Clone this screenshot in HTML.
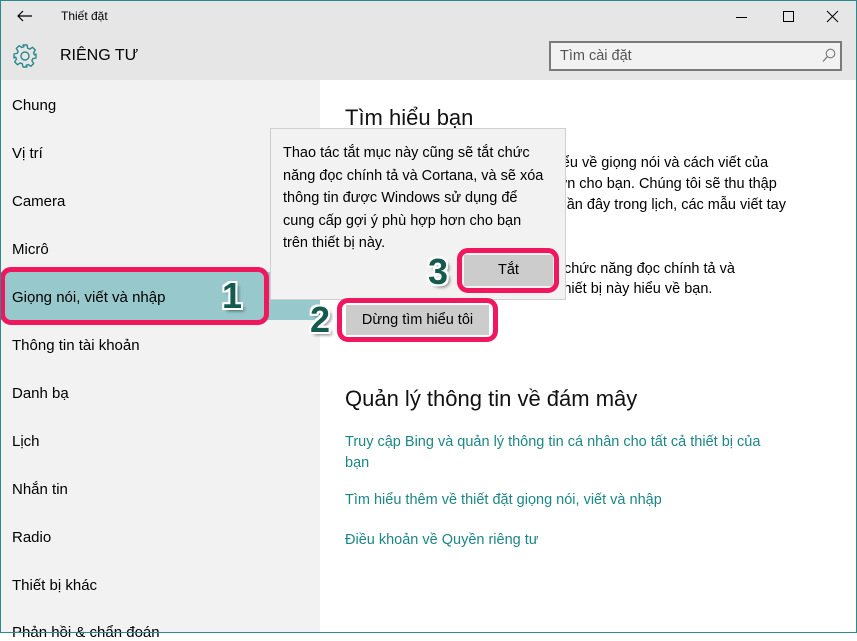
<!DOCTYPE html>
<html><head><meta charset="utf-8"><style>
*{margin:0;padding:0;box-sizing:border-box}
body{width:857px;height:633px;overflow:hidden;position:relative;background:#fff;font-family:"Liberation Sans","DejaVu Sans",sans-serif;color:#000}
.a{position:absolute;white-space:nowrap}
.frame{position:absolute;left:0;top:0;width:857px;height:633px;border:1px solid #2b8a8e;pointer-events:none;z-index:50}
.top{position:absolute;left:0;top:0;width:857px;height:80px;background:#e6e6e6}
.side{position:absolute;left:0;top:80px;width:320px;height:553px;background:#f2f2f2}
.item{position:absolute;left:12px;font-size:15px;color:#000}
.p{font-size:14.5px;color:#000}
.link{font-size:14.5px;color:#1c8686}
.pink{position:absolute;border:5px solid #f0175e;border-radius:11px}
.num{position:absolute;font-size:36px;font-weight:900;color:#155a4e;font-family:"Liberation Sans",sans-serif;
text-shadow:2px 0 0 #fff,-2px 0 0 #fff,0 2px 0 #fff,0 -2px 0 #fff,2px 2px 0 #fff,-2px -2px 0 #fff,2px -2px 0 #fff,-2px 2px 0 #fff,3px 3px 3px rgba(0,0,0,.5)}
.btn{position:absolute;background:#cccccc;font-size:14.5px;text-align:center}
</style></head><body>
<div class="top"></div>
<svg class="a" style="left:16px;top:9px" width="18" height="14" viewBox="0 0 18 14"><path d="M16 7H2M7 2L2 7l5 5" fill="none" stroke="#000" stroke-width="1.2"/></svg>
<div class="a" style="left:61px;top:9px;font-size:12px">Thiết đặt</div>
<svg class="a" style="left:736px;top:10px" width="110" height="14" viewBox="0 0 110 14"><path d="M0 7.5H11" stroke="#000" stroke-width="1"/><rect x="47.5" y="1.5" width="10" height="10" fill="none" stroke="#000"/><path d="M91 1l11 11M102 1L91 12" stroke="#000"/></svg>
<svg class="a" style="left:12px;top:43px" width="26" height="26" viewBox="0 0 26 26"><path d="M11 2h4l.7 3.2 2 .9 2.8-1.8 2.8 2.8-1.8 2.8.9 2L24 11v4l-3.2.7-.9 2 1.8 2.8-2.8 2.8-2.8-1.8-2 .9L15 24h-4l-.7-3.2-2-.9-2.8 1.8-2.8-2.8 1.8-2.8-.9-2L2 15v-4l3.2-.7.9-2-1.8-2.8 2.8-2.8 2.8 1.8 2-.9z" fill="none" stroke="#2a8a8a" stroke-width="1.4" stroke-linejoin="round"/><circle cx="13" cy="13" r="4" fill="none" stroke="#2a8a8a" stroke-width="1.4"/></svg>
<div class="a" style="left:60px;top:47px;font-size:16px;">RIÊNG TƯ</div>
<div class="a" style="left:549px;top:41px;width:293px;height:30px;border:2px solid #7a7a7a;background:#f2f2f2"></div>
<div class="a" style="left:560px;top:48px;font-size:14.5px;color:#555">Tìm cài đặt</div>
<svg class="a" style="left:822px;top:48px" width="14" height="16" viewBox="0 0 14 16"><circle cx="8.5" cy="5.5" r="4.3" fill="none" stroke="#777" stroke-width="1.1"/><path d="M5.5 8.5L1 13.5" stroke="#777" stroke-width="1.3"/></svg>
<div class="side"></div>
<div class="a" style="left:0;top:272px;width:320px;height:48px;background:#96c8cc"></div>
<div class="item a" style="top:97px">Chung</div>
<div class="item a" style="top:145px">Vị trí</div>
<div class="item a" style="top:193px">Camera</div>
<div class="item a" style="top:241px">Micrô</div>
<div class="item a" style="top:289px">Giọng nói, viết và nhập</div>
<div class="item a" style="top:337px">Thông tin tài khoản</div>
<div class="item a" style="top:385px">Danh bạ</div>
<div class="item a" style="top:433px">Lịch</div>
<div class="item a" style="top:481px">Nhắn tin</div>
<div class="item a" style="top:529px">Radio</div>
<div class="item a" style="top:577px">Thiết bị khác</div>
<div class="item a" style="top:624px">Phản hồi &amp; chẩn đoán</div>
<div class="a" style="left:345px;top:105px;font-size:22px;color:#111">Tìm hiểu bạn</div>
<div class="a p" style="left:345px;top:153px;line-height:21px">Windows và Cortana có thể tìm hiểu về giọng nói và cách viết của<br>bạn để đưa ra đề xuất phù hợp hơn cho bạn. Chúng tôi sẽ thu thập<br>thông tin như số liên lạc, sự kiện gần đây trong lịch, các mẫu viết tay<br>và lịch sử nhập.</div>
<div class="a p" style="left:345px;top:259px;line-height:20px">Việc tắt tính năng này cũng sẽ tắt chức năng đọc chính tả và<br>Cortana, đồng thời xóa những gì thiết bị này hiểu về bạn.</div>
<div class="a" style="left:345px;top:386px;font-size:22px;color:#111">Quản lý thông tin về đám mây</div>
<div class="a link" style="left:345px;top:432px;line-height:21px">Truy cập Bing và quản lý thông tin cá nhân cho tất cả thiết bị của<br>bạn</div>
<div class="a link" style="left:345px;top:492px">Tìm hiểu thêm về thiết đặt giọng nói, viết và nhập</div>
<div class="a link" style="left:345px;top:532px">Điều khoản về Quyền riêng tư</div>
<div class="btn" style="left:346px;top:305px;width:143px;height:30px;line-height:30px">Dừng tìm hiểu tôi</div>
<div class="a" style="left:270px;top:128px;width:296px;height:172px;background:#f2f2f2;border:1px solid #cfcfcf;z-index:5"></div>
<div class="a p" style="left:283px;top:142px;line-height:22.5px;z-index:6">Thao tác tắt mục này cũng sẽ tắt chức<br>năng đọc chính tả và Cortana, và sẽ xóa<br>thông tin được Windows sử dụng để<br>cung cấp gợi ý phù hợp hơn cho bạn<br>trên thiết bị này.</div>
<div class="btn" style="left:464px;top:255px;width:89px;height:31px;line-height:31px;z-index:6">Tắt</div>
<div class="pink" style="left:0;top:267px;width:269px;height:58px;z-index:7"></div>
<div class="pink" style="left:337px;top:298px;width:161px;height:44px;z-index:7"></div>
<div class="pink" style="left:457px;top:248px;width:102px;height:45px;z-index:7"></div>
<div class="num" style="left:222px;top:275px;z-index:8">1</div>
<div class="num" style="left:310px;top:299px;z-index:8">2</div>
<div class="num" style="left:428px;top:251px;z-index:8">3</div>
<div class="frame"></div>
</body></html>
